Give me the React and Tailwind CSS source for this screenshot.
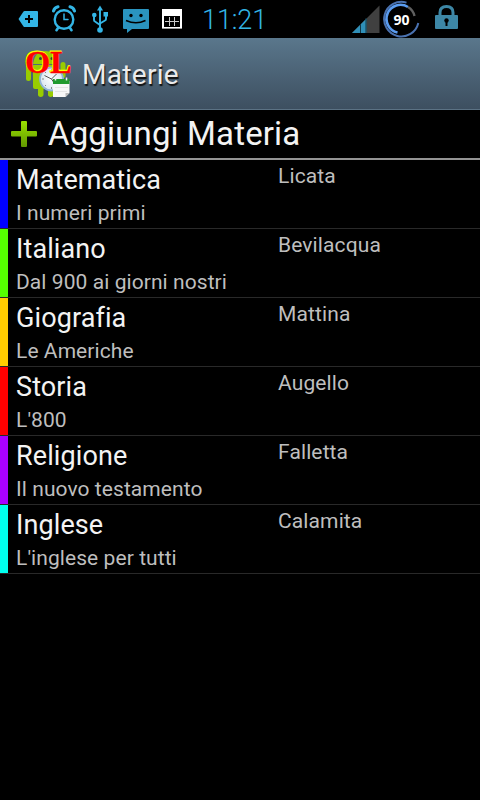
import React from "react";

// --- Status bar icons ---
const AddTagIcon = () => (
  <svg className="h-[38px] w-5 shrink-0" viewBox="0 0 20 38">
    <path d="M.5 19l5-7.500Q6 11 6.500 11h12.500q1 0 1 1v14q0 1-1 1H6.500q-.5 0-1-.6z" fill="#33b5e5" />
    <path d="M11 15v8M7 19h8" stroke="#000" strokeWidth="2" />
  </svg>
);

const AlarmIcon = () => (
  <svg className="h-[38px] w-6 shrink-0" viewBox="0 0 24 38" fill="none" stroke="#33b5e5" strokeLinecap="round">
    <circle cx="12" cy="19.500" r="9.300" strokeWidth="2.400" />
    <path d="M12 14v5.500h4" strokeWidth="1.500" />
    <path d="M6 28l-1.500 2.200M18 28l1.500 2.200" strokeWidth="2.600" />
    <path d="M1.500 11Q2.500 7.500 6 6.800M22.500 11Q21.500 7.500 18 6.800" strokeWidth="3" />
  </svg>
);

const UsbIcon = () => (
  <svg className="h-[38px] w-4 shrink-0" viewBox="0 0 16 38" fill="none" stroke="#33b5e5">
    <path d="M8 9v20M2 16v4q0 1 1 1.500l5 3.500M14 16v3q0 1-1 1.500l-5 3" strokeWidth="1.900" />
    <path d="M8 5.500l3 5H5z" fill="#33b5e5" stroke="none" />
    <circle cx="2.300" cy="15" r="2.300" fill="#33b5e5" stroke="none" />
    <rect x="11.500" y="12" width="4.500" height="4.500" fill="#33b5e5" stroke="none" />
    <circle cx="8" cy="30" r="2.800" fill="#33b5e5" stroke="none" />
  </svg>
);

const MessageIcon = () => (
  <svg className="h-[38px] w-[26px] shrink-0" viewBox="0 0 26 38">
    <path d="M1 9h24q1 0 1 1v18q0 1-1 1H9l-5 4v-4H1q-1 0-1-1V10q0-1 1-1z" fill="#2a94bf" />
    <circle cx="8" cy="15.500" r="1.700" />
    <circle cx="18" cy="15.500" r="1.700" />
    <path d="M3 20.500q10 4.500 19.500 0" fill="none" stroke="#000" strokeWidth="1.600" />
  </svg>
);

const CalendarIcon = () => (
  <svg className="h-[38px] w-5 shrink-0" viewBox="0 0 20 38">
    <path d="M0 9h20v20H0z" fill="#fff" />
    <path d="M2 16h16v11H2z" />
    <path d="M7.500 17v9M12.500 17v9M3 21.500h14" stroke="#ccc" strokeWidth="1" />
    <path d="M0 28.500h20" stroke="#999" />
  </svg>
);

const SignalIcon = () => (
  <svg className="h-[38px] w-7 shrink-0" viewBox="0 0 28 38">
    <path d="M0 33L27.500 5.500V33z" fill="#404040" />
    <path d="M0 33l14.500-14.500V33z" fill="#2f8fb8" />
    <path d="M8.500 24v9M14 18v15" stroke="#123644" strokeWidth="1" />
  </svg>
);

const BatteryIcon = () => (
  <svg className="h-[38px] w-[38px] shrink-0" viewBox="0 0 38 38" fill="none">
    <path d="M24.500 2.600A17.300 17.300 0 1 0 36.300 23" stroke="#4a72b0" strokeWidth="2" />
    <path d="M26 7A14 14 0 1 0 15.500 32.500" stroke="#5a9cf0" strokeWidth="2.600" />
    <path d="M26 7A14 14 0 0 1 32.500 16" stroke="#606060" strokeWidth="2.400" />
    <text x="19.500" y="25" textAnchor="middle" fill="#fff" className="font-['Open_Sans',sans-serif] text-[14px] font-bold">90</text>
  </svg>
);

const LockIcon = () => (
  <svg className="h-[38px] w-[23px] shrink-0" viewBox="0 0 23 38">
    <path d="M5 16v-3.500q0-6 6.500-6t6.500 6V16" fill="none" stroke="#3d87a6" strokeWidth="3" />
    <rect x="0" y="15" width="23" height="14" rx="1" fill="#3d87a6" />
    <circle cx="11.500" cy="20.500" r="2.200" />
    <path d="M11.500 21v5" stroke="#000" strokeWidth="2" />
  </svg>
);

// --- App icon: green robot, clock, notepad and the OL lettering ---
const AppLogo = () => (
  <svg className="h-[71px] w-[54px] shrink-0" viewBox="0 0 54 71">
    <defs>
      <radialGradient id="face">
        <stop offset="0" stopColor="#fff" />
        <stop offset="1" stopColor="#d9e6f0" />
      </radialGradient>
    </defs>
    <g fill="#99cc00">
      <path d="M9 26Q11 13 21 13T34 26z" />
      <path d="M9 27h25v22q0 2-2 2H11q-2 0-2-2z" />
      <rect x="2" y="24" width="5" height="19" rx="2.500" />
      <rect x="14" y="42" width="5.500" height="17" rx="2.700" />
      <rect x="24" y="42" width="5.500" height="17" rx="2.700" />
      <rect x="36.500" y="24" width="5" height="16" rx="2.500" />
    </g>
    <circle cx="16.500" cy="20.500" r="1.500" fill="#335" />
    <circle cx="28" cy="20.500" r="1.500" fill="#335" />
    <circle cx="27.500" cy="41" r="11.500" fill="url(#face)" stroke="#8fb4d6" strokeWidth="1.800" />
    <path d="M27.500 41l-7-3.500M27.500 41l5-5M27.500 41l4 6" stroke="#555" strokeWidth="1" />
    <path d="M27.500 31.500v2M18 41h2M27.500 49v2M21 48l1-1M21 34l1 1" stroke="#888" strokeWidth="1" />
    <path d="M29 43h16.500v12l-4 4H29z" fill="#f7f7f7" />
    <path d="M41.500 59v-4h4z" fill="#bbb" />
    <path d="M29 41h16.500v5H29z" fill="#219a2d" />
    <path d="M31.500 39.500v3M42.500 39.500v3" stroke="#eee" strokeWidth="1.500" />
    <path d="M31 49.500h13M31 53.500h12" stroke="#ddd" strokeWidth=".7" />
    <g className="font-['Liberation_Serif',serif] text-[32px] font-bold">
      <text x="0.500" y="34" fill="#ffff00" stroke="#ffff00" strokeWidth="1">OL</text>
      <text x="1.300" y="35" fill="#ff0000" stroke="#ff0000" strokeWidth=".5">OL</text>
    </g>
  </svg>
);

const PlusIcon = () => (
  <svg className="h-[26px] w-[26px] shrink-0" viewBox="0 0 26 26">
    <defs>
      <linearGradient id="plus" x1="0" y1="0" x2="0" y2="1">
        <stop offset="0" stopColor="#99e000" />
        <stop offset="1" stopColor="#629800" />
      </linearGradient>
    </defs>
    <path d="M10 1q0-1 1-1h4q1 0 1 1v9h9q1 0 1 1v3.500q0 1-1 1h-9V25q0 1-1 1h-4q-1 0-1-1v-9.500H1q-1 0-1-1V11q0-1 1-1h9z" fill="url(#plus)" />
  </svg>
);

// --- Subjects ---
const subjects = [
  { name: "Matematica", topic: "I numeri primi", teacher: "Licata", color: "bg-[#0000ff]" },
  { name: "Italiano", topic: "Dal 900 ai giorni nostri", teacher: "Bevilacqua", color: "bg-[#55ff00]" },
  { name: "Giografia", topic: "Le Americhe", teacher: "Mattina", color: "bg-[#ffcc00]" },
  { name: "Storia", topic: "L'800", teacher: "Augello", color: "bg-[#ff0000]" },
  { name: "Religione", topic: "Il nuovo testamento", teacher: "Falletta", color: "bg-[#aa00ff]" },
  { name: "Inglese", topic: "L'inglese per tutti", teacher: "Calamita", color: "bg-[#00ffee]" },
];

export default function App() {
  return (
    <main className="h-screen w-full overflow-hidden bg-black font-['Roboto',sans-serif] text-[#f3f3f3]">
      {/* Status bar */}
      <div className="flex h-[38px] items-center justify-between pr-[22px] pl-[18px]">
        <div className="flex items-center">
          <AddTagIcon />
          <div className="ml-3.5"><AlarmIcon /></div>
          <div className="ml-4"><UsbIcon /></div>
          <div className="ml-[15px]"><MessageIcon /></div>
          <div className="ml-[13px]"><CalendarIcon /></div>
          <span className="ml-5 pt-0.5 text-[27px] leading-9 font-light tracking-[-0.1px] text-[#33b5e5]">11:21</span>
        </div>
        <div className="flex items-center">
          <SignalIcon />
          <div className="ml-0.5"><BatteryIcon /></div>
          <div className="ml-[15px]"><LockIcon /></div>
        </div>
      </div>

      {/* Action bar */}
      <header className="flex h-[72px] items-center border-b border-[#5b7284] bg-linear-to-b from-[#5a778c] to-[#3d4f60] pl-6">
        <AppLogo />
        <h1 className="ml-1 pt-[3px] text-[28px] leading-none tracking-[0.3px] text-[#ebebeb] [text-shadow:1px_2px_1px_#111]">Materie</h1>
      </header>

      <div className="flex h-[50px] items-center border-b-2 border-[#949494] pl-[11px]">
        <PlusIcon />
        <span className="ml-[11px] pb-0.5 text-[33px] leading-none tracking-[0.15px]">Aggiungi Materia</span>
      </div>

      <ul>
        {subjects.map((subject) => (
          <li key={subject.name} className="flex h-[69px] border-b border-[#292929]">
            <div className={`w-2 ${subject.color}`} />
            <div className="w-[262px] pt-1 pl-2">
              <div className="text-[27px] leading-8 tracking-[0.1px]">{subject.name}</div>
              <div className="mt-[5px] text-[21px] leading-[25px] tracking-[0.07px] text-[#bebebe]">{subject.topic}</div>
            </div>
            <div className="pt-1 pl-2 text-[21px] leading-[25px] tracking-[0.12px] text-[#bebebe]">{subject.teacher}</div>
          </li>
        ))}
      </ul>
    </main>
  );
}
